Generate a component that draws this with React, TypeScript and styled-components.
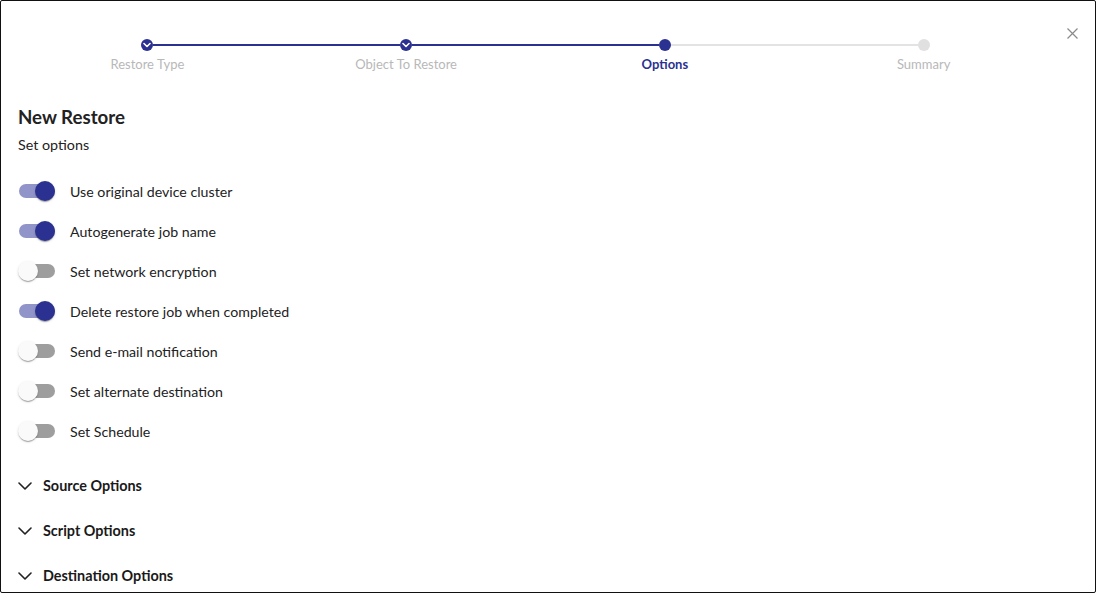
import React, { useState } from "react";
import styled, { createGlobalStyle } from "styled-components";

const Global = createGlobalStyle`
  html, body { margin: 0; padding: 0; background: #fff; }
  body { font-family: "Lato", "Open Sans", sans-serif; color: #212121; }
  * { box-sizing: border-box; }
`;

const Dialog = styled.div`
  width: 1096px;
  height: 593px;
  border: 1px solid #111;
  border-radius: 2px;
  background: #fff;
  overflow: hidden;
  position: relative;
  padding: 0 17px;
`;

const CloseButton = styled.button`
  position: absolute;
  top: 25px;
  right: 16px;
  width: 14px;
  height: 14px;
  padding: 0;
  border: 0;
  background: transparent;
  display: flex;
  align-items: center;
  justify-content: center;
  cursor: pointer;
`;

const Stepper = styled.div`
  display: grid;
  grid-template-columns: repeat(4, 258.75px);
  padding-top: 38px;
`;

const Step = styled.div`
  position: relative;
  display: flex;
  flex-direction: column;
  align-items: center;
`;

const Connector = styled.div<{ $active: boolean }>`
  position: absolute;
  top: 5px;
  left: calc(-50% + 6px);
  right: calc(50% + 6px);
  height: 2px;
  background: ${(p) => (p.$active ? "#2a3191" : "#e3e3e3")};
`;

const Dot = styled.div<{ $state: "done" | "active" | "todo" }>`
  width: 12px;
  height: 12px;
  border-radius: 50%;
  background: ${(p) => (p.$state === "todo" ? "#e0e0e0" : "#2a3191")};
  display: flex;
  align-items: center;
  justify-content: center;
  position: relative;
  z-index: 1;
`;

const StepLabel = styled.div<{ $active: boolean }>`
  margin-top: 6px;
  font-size: 13px;
  line-height: 14px;
  color: ${(p) => (p.$active ? "#2a3191" : "#b8b8b8")};
  font-weight: ${(p) => (p.$active ? 700 : 400)};
`;

const Title = styled.h1`
  margin: 36px 0 0 0;
  font-size: 18.7px;
  line-height: 20px;
  font-weight: 700;
  color: #222;
`;

const Subtitle = styled.div`
  margin-top: 10px;
  font-size: 14.3px;
  line-height: 16px;
  color: #222;
`;

const OptionList = styled.div`
  margin-top: 18px;
  display: flex;
  flex-direction: column;
`;

const OptionRow = styled.label`
  display: flex;
  align-items: center;
  height: 40px;
  cursor: pointer;
`;

const Track = styled.span<{ $on: boolean }>`
  position: relative;
  width: 36px;
  height: 14px;
  border-radius: 7px;
  margin-left: 1px;
  background: ${(p) => (p.$on ? "#9194c8" : "#9e9e9e")};
  flex: none;
`;

const Thumb = styled.span<{ $on: boolean }>`
  position: absolute;
  top: -3px;
  left: ${(p) => (p.$on ? "16px" : "-1px")};
  width: 20px;
  height: 20px;
  border-radius: 50%;
  background: ${(p) => (p.$on ? "#2a3191" : "#fafafa")};
  box-shadow: 0 2px 1px -1px rgba(0,0,0,0.2), 0 1px 1px 0 rgba(0,0,0,0.14), 0 1px 3px 0 rgba(0,0,0,0.12);
`;

const OptionText = styled.span`
  margin-left: 15px;
  font-size: 14.2px;
  color: #222;
`;

const Sections = styled.div`
  margin-top: 12px;
  display: flex;
  flex-direction: column;
`;

const SectionHeader = styled.div`
  display: flex;
  align-items: center;
  height: 45px;
  cursor: pointer;
`;

const SectionTitle = styled.span`
  margin-left: 11px;
  font-size: 14.4px;
  font-weight: 700;
  color: #1a1a1a;
`;

const Check = () => (
  <svg width="8" height="6" viewBox="0 0 8 6">
    <path d="M1 1.5 L4 4.5 L7 1.5" fill="none" stroke="#fff" strokeWidth="1.6" strokeLinecap="round" strokeLinejoin="round" />
  </svg>
);

const Chevron = () => (
  <svg width="14" height="8" viewBox="0 0 14 8">
    <path d="M1 1 L7 7 L13 1" fill="none" stroke="#222" strokeWidth="1.6" strokeLinecap="round" strokeLinejoin="round" />
  </svg>
);

const steps: { label: string; state: "done" | "active" | "todo" }[] = [
  { label: "Restore Type", state: "done" },
  { label: "Object To Restore", state: "done" },
  { label: "Options", state: "active" },
  { label: "Summary", state: "todo" },
];

const initialOptions = [
  { label: "Use original device cluster", on: true },
  { label: "Autogenerate job name", on: true },
  { label: "Set network encryption", on: false },
  { label: "Delete restore job when completed", on: true },
  { label: "Send e-mail notification", on: false },
  { label: "Set alternate destination", on: false },
  { label: "Set Schedule", on: false },
];

const sections = ["Source Options", "Script Options", "Destination Options"];

export default function App() {
  const [opts, setOpts] = useState(initialOptions);
  return (
    <>
      <Global />
      <Dialog>
        <CloseButton aria-label="close">
          <svg width="11" height="11" viewBox="0 0 11 11">
            <path d="M0.5 0.5 L10.5 10.5 M10.5 0.5 L0.5 10.5" stroke="#8a8a8a" strokeWidth="1.2" />
          </svg>
        </CloseButton>
        <Stepper>
          {steps.map((s, i) => (
            <Step key={s.label}>
              {i > 0 && <Connector $active={s.state !== "todo"} />}
              <Dot $state={s.state}>{s.state === "done" && <Check />}</Dot>
              <StepLabel $active={s.state === "active"}>{s.label}</StepLabel>
            </Step>
          ))}
        </Stepper>
        <Title>New Restore</Title>
        <Subtitle>Set options</Subtitle>
        <OptionList>
          {opts.map((o, i) => (
            <OptionRow
              key={o.label}
              onClick={() => setOpts(opts.map((x, j) => (j === i ? { ...x, on: !x.on } : x)))}
            >
              <Track $on={o.on}>
                <Thumb $on={o.on} />
              </Track>
              <OptionText>{o.label}</OptionText>
            </OptionRow>
          ))}
        </OptionList>
        <Sections>
          {sections.map((s) => (
            <SectionHeader key={s}>
              <Chevron />
              <SectionTitle>{s}</SectionTitle>
            </SectionHeader>
          ))}
        </Sections>
      </Dialog>
    </>
  );
}
